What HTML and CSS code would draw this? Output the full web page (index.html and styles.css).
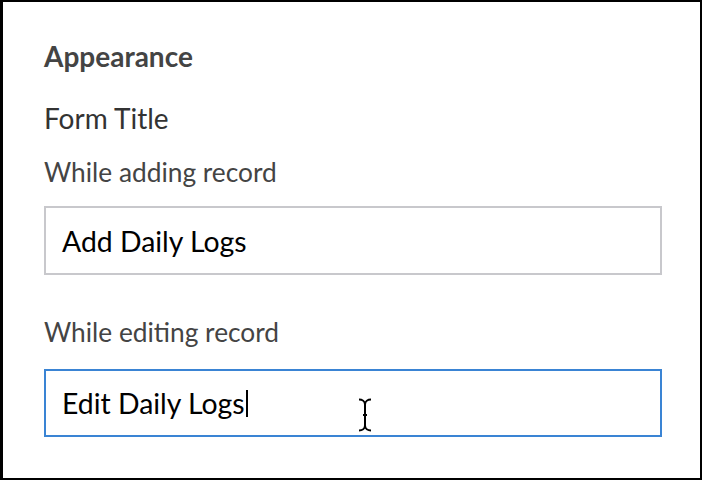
FILE: index.html
```html
<!DOCTYPE html>
<html>
<head>
<meta charset="utf-8">
<link rel="stylesheet" href="styles.css">
</head>
<body>
<div class="frame">
  <section class="panel">
    <h2 class="heading">Appearance</h2>
    <div class="group-title">Form Title</div>
    <label class="field-label">While adding record</label>
    <div class="input">Add Daily Logs</div>
    <label class="field-label second">While editing record</label>
    <div class="input focused"><span class="value">Edit Daily Logs</span><span class="caret"></span>
      <svg class="ibeam" width="16" height="34" viewBox="0 0 16 34">
        <path d="M2 1.5 C5 1.5 8 3 8 6.5 C8 3 11 1.5 14 1.5 M8 6.5 V27.5 M2 32.5 C5 32.5 8 31 8 27.5 C8 31 11 32.5 14 32.5 M6 17 H10" fill="none" stroke="#000" stroke-width="2"/>
      </svg>
    </div>
  </section>
</div>
</body>
</html>
```

FILE: styles.css
```css
html, body {
  margin: 0;
  padding: 0;
  background: #fff;
}
.frame {
  box-sizing: border-box;
  width: 702px;
  height: 480px;
  border: 2px solid #000;
  border-left-width: 3px;
  background: #fff;
  font-family: Lato, "Open Sans", sans-serif;
}
.panel {
  padding: 38px 38px 0 41px;
}
.heading {
  margin: 0;
  font-size: 28px;
  font-weight: 700;
  line-height: 32px;
  color: #444;
}
.group-title {
  margin-top: 30px;
  font-size: 28px;
  line-height: 32px;
  color: #333;
}
.field-label {
  display: block;
  margin-top: 23px;
  font-size: 26.3px;
  line-height: 30px;
  color: #444;
}
.field-label.second {
  margin-top: 42px;
}
.input {
  position: relative;
  box-sizing: border-box;
  height: 69px;
  margin-top: 19px;
  border: 2px solid #c8c8cc;
  padding: 0 16px;
  display: flex;
  align-items: center;
  font-size: 28.4px;
  color: #000;
}
.input.focused {
  height: 68px;
  border-color: #3a84d4;
  margin-top: 22px;
}
.caret {
  width: 2px;
  height: 27px;
  margin-left: 1px;
  background: #000;
}
.ibeam {
  position: absolute;
  left: 311px;
  top: 27px;
}
```
